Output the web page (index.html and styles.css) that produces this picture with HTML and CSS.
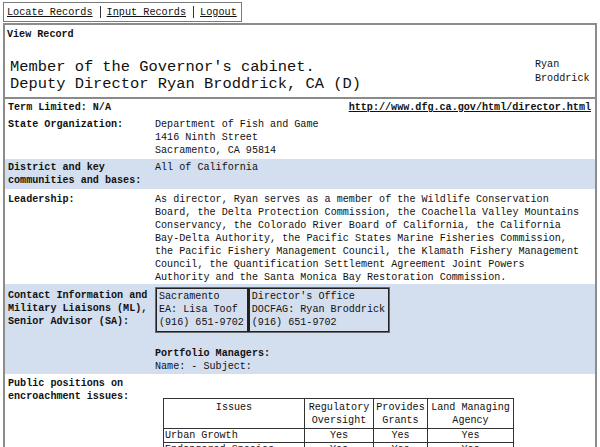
FILE: index.html
```html
<!DOCTYPE html>
<html>
<head>
<meta charset="utf-8">
<title>View Record</title>
<link rel="stylesheet" href="styles.css">
</head>
<body>
<nav class="nav">
  <a class="nav-link" href="#">Locate Records</a><span class="nav-sep"></span><a class="nav-link" href="#">Input Records</a><span class="nav-sep"></span><a class="nav-link" href="#">Logout</a>
</nav>
<div class="record">
  <div class="caption">View Record</div>
  <div class="header">
    <h1 class="title">Member of the Governor's cabinet.<br>Deputy Director Ryan Broddrick, CA (D)</h1>
    <div class="name">Ryan<br>Broddrick</div>
  </div>
  <div class="row term">
    <b>Term Limited: N/A</b>
    <a class="url" href="#">http://www.dfg.ca.gov/html/director.html</a>
  </div>
  <div class="row">
    <div class="label">State Organization:</div>
    <div class="value">Department of Fish and Game<br>1416 Ninth Street<br>Sacramento, CA 95814</div>
  </div>
  <div class="row shaded">
    <div class="label">District and key communities and bases:</div>
    <div class="value">All of California</div>
  </div>
  <div class="row leadership">
    <div class="label">Leadership:</div>
    <div class="value">As director, Ryan serves as a member of the Wildlife Conservation<br>Board, the Delta Protection Commission, the Coachella Valley Mountains<br>Conservancy, the Colorado River Board of California, the California<br>Bay-Delta Authority, the Pacific States Marine Fisheries Commission,<br>the Pacific Fishery Management Council, the Klamath Fishery Management<br>Council, the Quantification Settlement Agreement Joint Powers<br>Authority and the Santa Monica Bay Restoration Commission.</div>
  </div>
  <div class="row shaded contact">
    <div class="label contact-label">Contact Information and Military Liaisons (ML), Senior Advisor (SA):</div>
    <div class="value">
      <div class="contacts">
        <div class="contact-cell">Sacramento<br>EA: Lisa Toof<br>(916) 651-9702</div>
        <div class="contact-cell">Director's Office<br>DOCFAG: Ryan Broddrick<br>(916) 651-9702</div>
      </div>
      <div class="portfolio">
        <b>Portfolio Managers:</b><br>Name: - Subject:
      </div>
    </div>
  </div>
  <div class="row">
    <div class="label">Public positions on encroachment issues:</div>
    <div class="value">
      <table class="issues">
        <colgroup>
          <col class="c-issue"><col class="c-reg"><col class="c-grant"><col class="c-land">
        </colgroup>
        <tr>
          <th>Issues</th>
          <th>Regulatory Oversight</th>
          <th>Provides Grants</th>
          <th>Land Managing Agency</th>
        </tr>
        <tr>
          <td class="issue">Urban Growth</td>
          <td>Yes</td>
          <td>Yes</td>
          <td>Yes</td>
        </tr>
        <tr>
          <td class="issue">Endangered Species</td>
          <td>Yes</td>
          <td>Yes</td>
          <td>Yes</td>
        </tr>
      </table>
    </div>
  </div>
</div>
</body>
</html>
```

FILE: styles.css
```css
html, body {
  margin: 0;
  background: #ffffff;
}

body {
  padding: 2px 3px 0 3px;
  font-family: "Liberation Mono", "DejaVu Sans Mono", monospace;
  font-size: 10.1px;
  line-height: 13px;
  color: #111111;
}

a {
  color: #111111;
  text-decoration: underline;
}

/* top navigation */
.nav {
  display: flex;
  align-items: center;
  width: fit-content;
  height: 18px;
  padding: 0 4px 0 3px;
  border: 1px solid #7a7a7a;
  font-size: 10.2px;
}

.nav-link {
  line-height: 18px;
  padding-top: 1px;
}

.nav-sep {
  display: inline-block;
  width: 1px;
  height: 12px;
  background: #333333;
  margin: 0 6px 0 7px;
}

/* record box */
.record {
  margin-top: 1px;
  border: 2px solid #8c8c8c;
  border-bottom: 0;
  min-height: 440px;
}

.caption {
  padding: 3px 2px 0;
  font-weight: bold;
}

.header {
  display: flex;
  justify-content: space-between;
  align-items: flex-start;
  border-bottom: 2px solid #8a8a8a;
  padding: 0 2px 4px 5px;
}

.title {
  margin: 18px 0 0 0;
  font-size: 15.4px;
  line-height: 17px;
  font-weight: normal;
}

.name {
  width: 58px;
  margin-top: 17px;
  line-height: 14px;
}

/* rows */
.row {
  display: grid;
  grid-template-columns: 147px 1fr;
  padding: 2px 2px 1px 3px;
  margin-top: 1px;
}

.row.term {
  display: flex;
  justify-content: space-between;
  padding-right: 4px;
  margin-top: 0;
}

.url {
  font-weight: bold;
}

.label {
  font-weight: bold;
}

.shaded {
  background: #d3deee;
  padding-bottom: 2px;
}

.leadership {
  margin-top: 2px;
  padding-bottom: 0;
  line-height: 13px;
}

.contact {
  margin-top: 0;
  padding-top: 3px;
  padding-bottom: 1px;
}

.contact-label {
  padding-top: 2px;
}

.contacts {
  display: flex;
  width: fit-content;
  border: 1px solid #6a6a6a;
}

.contact-cell {
  border: 1px solid #222222;
  padding: 1px 3px 2px 2px;
}

.contact-cell + .contact-cell {
  border-left-width: 2px;
}

.portfolio {
  margin-top: 14px;
}

/* issues table */
.issues {
  margin: 21px 0 0 8px;
  border-collapse: collapse;
  width: 350px;
  font-size: 10.1px;
  line-height: 13px;
  table-layout: fixed;
}

.c-issue { width: 141px; }
.c-reg { width: 69px; }
.c-grant { width: 54px; }
.c-land { width: 86px; }

.issues th,
.issues td {
  border: 1px solid #333333;
  text-align: center;
  vertical-align: top;
  font-weight: normal;
  padding: 0 1px;
}

.issues th {
  padding: 2px 1px 1px;
}

.issues td.issue {
  text-align: left;
}
```
